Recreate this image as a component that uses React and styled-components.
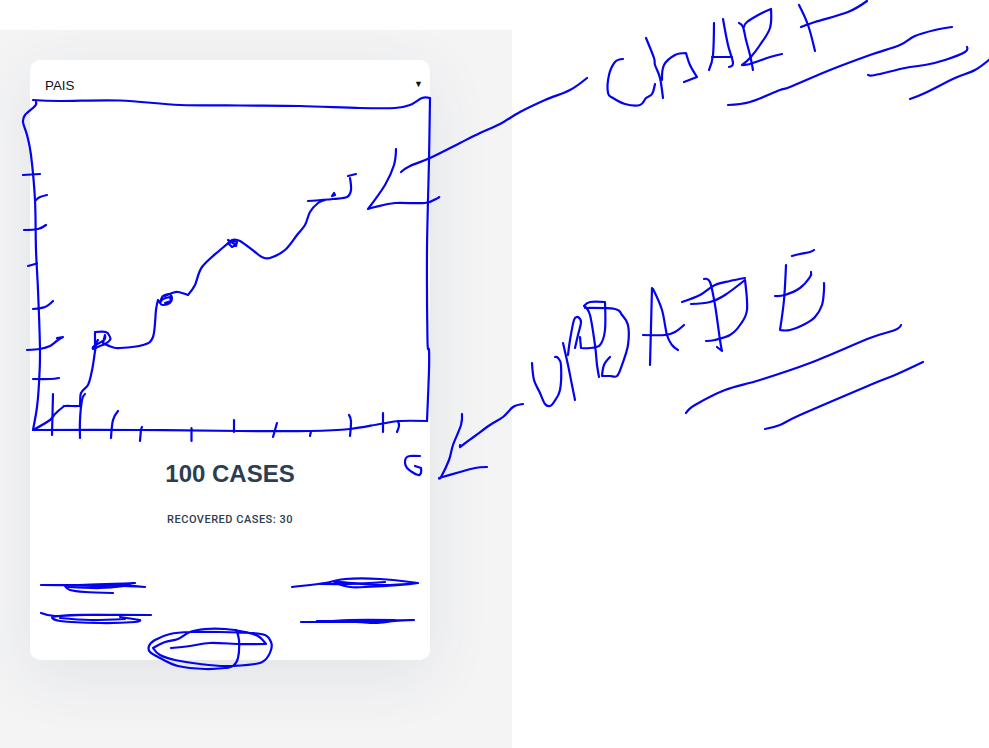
import React from "react";
import styled, { createGlobalStyle } from "styled-components";

const Global = createGlobalStyle`
  html, body { margin: 0; padding: 0; background: #fff; overflow: hidden; }
  body { font-family: "Liberation Sans", Arial, sans-serif; }
`;

const Page = styled.div`
  position: relative;
  width: 989px;
  height: 748px;
  padding-top: 30px;
  box-sizing: border-box;
  overflow: hidden;
`;

const Panel = styled.main`
  width: 512px;
  height: 718px;
  padding: 30px;
  box-sizing: border-box;
  background: #f4f4f5;
`;

const Card = styled.section`
  width: 400px;
  height: 600px;
  display: flex;
  flex-direction: column;
  background: #fff;
  border-radius: 10px;
  box-shadow: 0 16px 64px rgba(44, 62, 80, 0.09);
`;

const CountrySelect = styled.div`
  display: flex;
  justify-content: space-between;
  align-items: center;
  height: 50px;
  padding: 0 7px 0 15px;
  font-size: 13.33px;
  color: #111;
`;

const Arrow = styled.span`
  font-size: 9px;
  line-height: 1;
  margin-top: -1px;
  color: #111;
`;

const ChartArea = styled.div`
  height: 350px;
  flex: none;
`;

const Title = styled.h1`
  margin: 0;
  text-align: center;
  font-size: 24px;
  line-height: 28px;
  font-weight: 700;
  color: #2c3e50;
`;

const Subtitle = styled.p`
  margin: 25px 0 0;
  text-align: center;
  font-family: Roboto, "Liberation Sans", sans-serif;
  font-size: 11px;
  line-height: 14px;
  font-weight: 500;
  letter-spacing: 0.5px;
  color: #2c3e50;
`;

const Sketch = styled.svg`
  position: absolute;
  inset: 0;
  width: 989px;
  height: 748px;
  pointer-events: none;
`;

const strokes = [
  // chart frame
  [[33,100],[60,101],[120,100.5],[180,105],[240,105.5],[300,106],[360,108],[395,108],[410,105],[422,98],[430,98]],
  [[430,98],[429,160],[427,250],[427.5,340],[429,350],[429,370],[427,421]],
  [[427,421],[400,421],[380,424],[350,429],[310,431],[240,431],[140,430],[33,430]],
  [[36,102],[35,106],[25,115],[23,122],[27,135],[31,155],[35,200],[36,250],[38,290],[40,350],[39,383],[37,407],[33,430]],
  // y ticks
  [[23,175],[40,174]], [[36,200],[40,197],[47,195]], [[24,230],[38,229],[46,225]], [[28,266],[37,263.5]],
  [[33,309],[45,307],[53,301]], [[27,350],[40,349],[50,346],[58,340],[63,337],[57,338]], [[33,379],[50,379],[59,378]],
  // x ticks
  [[53,394],[52,435]], [[85,394],[82,400],[80,420],[80,438]], [[118,411],[113,420],[111,438]], [[142,427],[141,430],[140,441]],
  [[191.5,428],[191.5,441]], [[234,420],[234,432]], [[277,423],[273,437]], [[311,431],[310,436]],
  [[349,415],[351,421],[350,436]], [[383,413],[383,432]], [[398,421],[399,426],[397,432]],
  // data line
  [[35,429],[50,420],[55,414],[63,407],[65,406],[78,406],[80,405],[81,393],[88,385],[91,375],[93,365],[96,345],[98,340]],
  [[95,348],[95,332],[106,332],[110,337],[110,340],[105,344],[100,346],[93,349],[94,346],[104,340],[105,335],[103,343],[112,347],[120,348],[143,345],[153,337],[156,310],[158,300],[160,303],[163,296],[170,294],[172,298],[170,303],[163,305],[160,303],[163,299],[170,297],[171,301],[165,303]],
  [[165,296],[172,293],[178,292],[188,295],[195,285],[202,267],[220,250],[226,245],[232,240],[240,241],[255,252],[262,257],[270,258],[285,250],[297,235],[305,225],[310,212],[318,203],[325,200]],
  [[228,240],[236,245],[232,247],[229,244],[232,241],[237,242],[236,246]],
  [[308,201],[333,199],[347,197],[351,190],[350,178]], [[348,176],[356,174]], [[332,196],[334,193],[335,195],[332,196]],
  // chart note
  [[396,149],[394,165],[385,185],[368,209],[375,207],[395,203],[425,203],[438,198],[439,197]],
  [[401,172],[410,166],[430,158],[460,143],[480,133],[500,124],[520,112],[545,100],[570,90],[587,78]],
  [[623,59],[615,62],[609,75],[608,93],[613,98],[625,104],[640,105],[646,98],[652,94],[655,84]],
  [[646,38],[654,58],[655,65],[660,78],[663,98]],
  [[662,80],[664,65],[675,55],[686,53],[690,65],[697,77],[684,82]],
  [[714,23],[713,55],[709,70]], [[723,19],[728,45],[733,63],[729,67]], [[712,57],[732,57]],
  [[739,23],[743,27],[746,40],[750,55],[753,70]],
  [[744,27],[747,22],[760,14],[771,9],[770,28],[760,45],[750,58],[742,65],[750,64],[770,57],[782,54]],
  [[799,5],[808,25],[815,51]], [[801,27],[815,22],[848,12],[867,1]],
  [[728,105],[750,102],[780,90],[790,87],[830,70],[870,55],[900,45],[915,36],[935,30],[952,27]],
  [[868,75],[875,75],[905,68],[925,65],[945,60],[965,52],[967,47]],
  [[910,99],[925,93],[955,78],[975,70],[990,59]],
  // update note
  [[532,363],[534,380],[540,393],[545,404],[550,406],[554,402],[560,390],[561,365],[558,358],[555,357]],
  [[563,343],[568,365],[572,385],[575,400]],
  [[568,355],[570,340],[574,320],[578,317],[581,322],[578,335],[575,348]],
  [[580,337],[581,348],[590,348],[600,345],[605,330],[605,302],[590,302],[584,306],[590,315],[595,345],[597,365],[599,377]],
  [[585,308],[615,309],[622,315],[628,325],[628,345],[622,365],[617,376],[610,376],[602,376],[604,365],[610,357]],
  [[652,288],[650,365]], [[653,289],[662,310],[667,335],[672,345],[678,350]], [[643,335],[665,335],[675,332],[684,325]],
  [[682,302],[700,295],[715,285],[730,281],[745,278]],
  [[691,304],[710,302],[725,295],[745,280],[747,310],[740,325],[730,335],[715,340],[706,341]],
  [[704,279],[710,282],[715,305],[720,340],[722,351],[717,347]],
  [[786,265],[784,300],[780,330],[790,330],[805,324],[815,317],[822,305],[824,290],[824,283]],
  [[775,296],[785,295],[800,288],[810,277],[811,272]], [[792,256],[800,254],[810,252],[814,250]],
  [[686,413],[695,405],[725,390],[760,380],[810,363],[870,338],[895,330],[901,325]],
  [[765,429],[780,425],[800,415],[870,385],[895,375],[923,362]],
  [[523,404],[513,407],[503,417],[490,425],[475,436],[460,447],[460,445]],
  [[462,414],[461,425],[453,445],[449,460],[441,477],[439,478],[460,472],[475,468],[487,467]],
  [[420,456],[410,456],[406,458],[405,463],[407,468],[412,472],[418,475],[421,473],[421,468],[415,466]],
  // scribbled controls
  [[41,585],[75,585],[135,583],[115,584],[145,587],[95,585],[65,586],[70,590],[85,592],[113,593]],
  [[62,585],[100,586],[130,585]], [[68,587],[100,588],[125,586]],
  [[41,613],[55,616],[85,615],[151,615],[110,615],[70,615],[52,617],[60,621],[100,623],[135,622],[140,620],[120,617]],
  [[60,618],[90,620],[125,619]],
  [[292,587],[325,583],[345,579],[380,579],[418,583],[380,585],[340,582],[335,583],[350,587],[365,587],[400,585],[418,583]],
  [[320,584],[350,584],[385,582]],
  [[301,622],[355,622],[375,623],[395,621],[414,620],[360,621],[317,621]],
  [[318,622],[350,620],[395,620]],
  [[171,648],[190,646],[210,643],[240,644],[266,644],[258,636],[245,632],[225,629],[205,629],[190,632],[178,639],[165,642],[153,648],[160,655],[175,660],[200,664],[225,666],[255,664],[265,660],[271,650],[271,642],[265,635],[250,633],[220,632],[190,632],[170,634],[155,640],[149,646],[150,652],[160,658],[178,666],[205,669],[225,668],[233,666],[238,658],[239,640],[236,630]],
];

// Smooth through every point; keep a hard corner where the pen turned sharply.
const tangent = (a, b, c) => {
  const ux = b[0] - a[0], uy = b[1] - a[1], vx = c[0] - b[0], vy = c[1] - b[1];
  const cos = (ux * vx + uy * vy) / (Math.hypot(ux, uy) * Math.hypot(vx, vy) || 1);
  if (cos < 0.35) return [0, 0];
  return [(c[0] - a[0]) / 6, (c[1] - a[1]) / 6];
};

const toPath = (pts) => {
  const t = pts.map((p, i) =>
    i === 0 || i === pts.length - 1 ? [0, 0] : tangent(pts[i - 1], p, pts[i + 1])
  );
  let d = `M${pts[0][0]} ${pts[0][1]}`;
  for (let i = 1; i < pts.length; i++) {
    const p = pts[i - 1], q = pts[i];
    d += ` C${(p[0] + t[i - 1][0]).toFixed(1)} ${(p[1] + t[i - 1][1]).toFixed(1)} ${(q[0] - t[i][0]).toFixed(1)} ${(q[1] - t[i][1]).toFixed(1)} ${q[0]} ${q[1]}`;
  }
  return d;
};

export default function App() {
  return (
    <>
      <Global />
      <Page>
        <Panel>
          <Card>
            <CountrySelect>
              <span>PAIS</span>
              <Arrow>▼</Arrow>
            </CountrySelect>
            <ChartArea />
            <Title>100 CASES</Title>
            <Subtitle>RECOVERED CASES: 30</Subtitle>
          </Card>
        </Panel>
        <Sketch viewBox="0 0 989 748" fill="none" stroke="#0303f0" strokeWidth="2.2" strokeLinecap="round" strokeLinejoin="round">
          {strokes.map((s, i) => <path key={i} d={toPath(s)} />)}
        </Sketch>
      </Page>
    </>
  );
}
